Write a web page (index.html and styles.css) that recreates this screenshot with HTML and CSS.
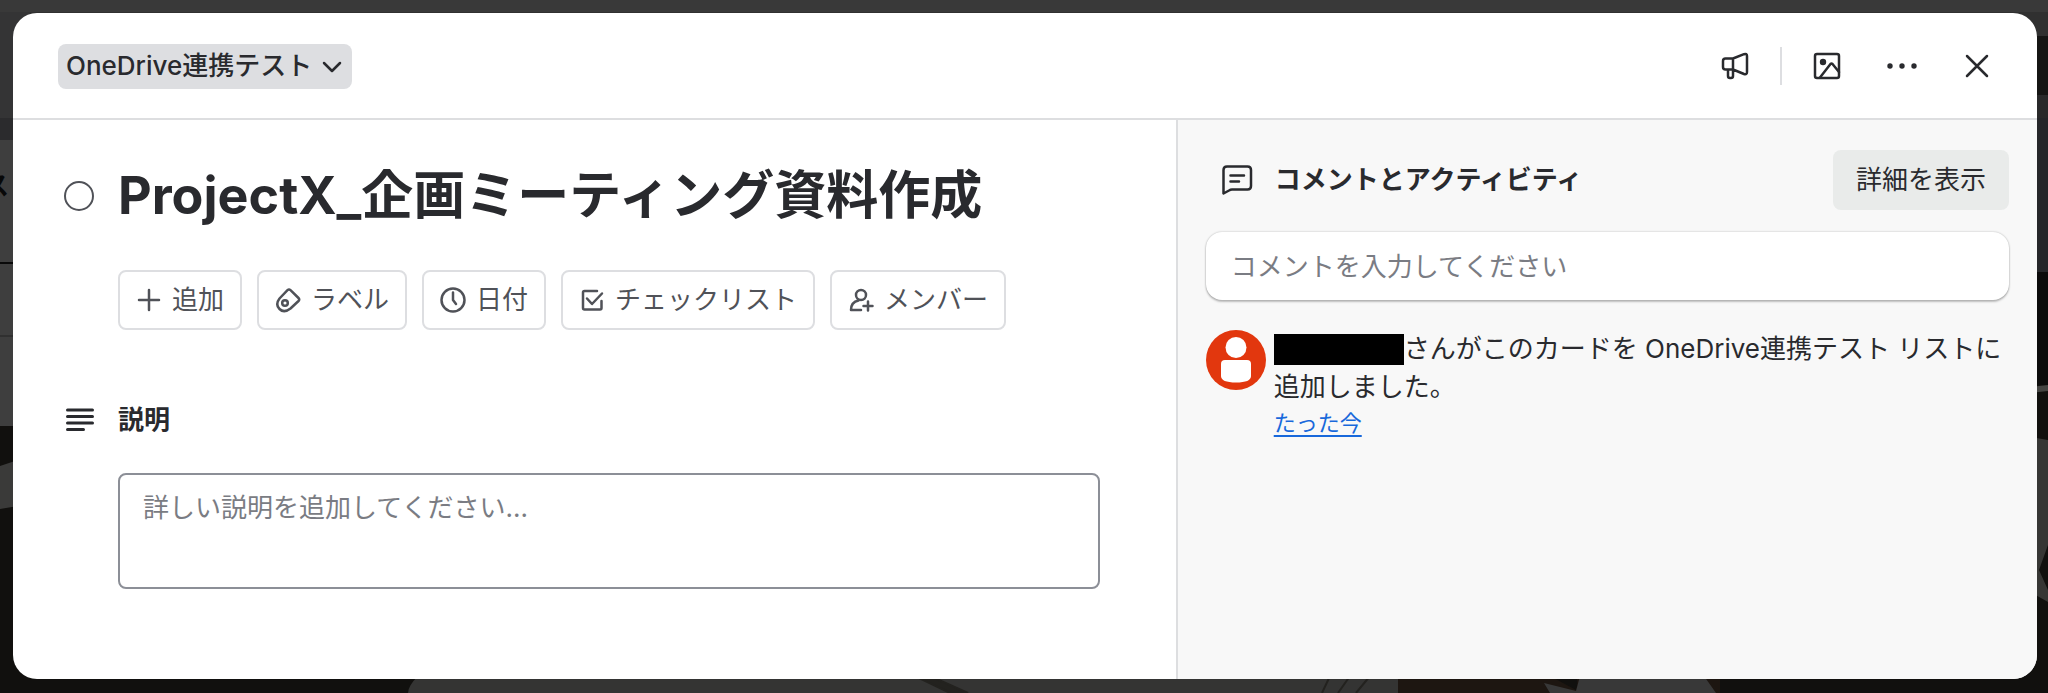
FILE: index.html
```html
<!DOCTYPE html>
<html lang="ja">
<head>
<meta charset="utf-8">
<meta name="viewport" content="width=device-width, initial-scale=1">
<title>ProjectX_企画ミーティング資料作成</title>
<link rel="stylesheet" href="styles.css">
</head>
<body>
<svg class="board" viewBox="0 0 2048 693" preserveAspectRatio="none" aria-hidden="true">
  <rect width="2048" height="693" fill="#11100e"/>
  <rect width="2048" height="12" fill="#393939"/>
  <rect y="12" width="2048" height="24" fill="#303030"/>
  <rect y="12" width="30" height="106" fill="#343435"/>
  <rect y="118" width="30" height="22" fill="#2b2b2d"/>
  <rect y="140" width="30" height="286" fill="#3e3e3e"/>
  <rect y="262" width="30" height="2" fill="#090909"/>
  <rect y="335" width="30" height="2" fill="#303030"/>
  <path d="M0 466L30 456V504L0 509Z" fill="#3a3a39"/>
  <rect x="2030" y="36" width="18" height="59" fill="#151514"/>
  <rect x="2030" y="95" width="18" height="23" fill="#29292a"/>
  <rect x="2030" y="118" width="18" height="154" fill="#25262a"/>
  <rect x="2030" y="272" width="18" height="113" fill="#0b0b0b"/>
  <path d="M2030 387L2048 385V391L2030 393Z" fill="#444442"/>
  <path d="M2030 437L2048 440V545L2039 570L2048 590V602L2030 592Z" fill="#363634"/>
  <path d="M418 676H1400V693H408Q408 686 418 676Z" fill="#343433"/>
  <path d="M1398 676H1550L1576 690Q1580 676 1572 676H1720V693H1398Z" fill="#1d1611"/>
  <path d="M1544 683L1576 691L1580 676H1704L1716 693H1550Z" fill="#383838"/>
  <path d="M930 676L968 693H950L915 676ZM1330 676L1322 693M1350 676L1338 693M1370 676L1356 693" fill="#23221f" stroke="#23221f" stroke-width="2"/>
  <text class="board-text" x="-17" y="195">ス</text>
</svg>

<main class="card">
  <header class="card-header">
    <button class="list-button" type="button">OneDrive連携テスト
      <svg width="24" height="24" viewBox="0 0 24 24" class="line"><path d="M4 9l8 8 8-8"/></svg>
    </button>
    <div class="actions">
      <button class="icon-button" type="button" aria-label="フィードバック">
        <svg width="32" height="32" viewBox="0 0 32 32" class="line"><path d="M14 8.500H6.500Q4 8.500 4 11V17Q4 19.500 6.500 19.500H14ZM14 8.500L25 4.200Q28 3.200 28 6V22Q28 25 25 24L14 19.500M9 19.500V26Q9 28 11 28H12Q14 28 14 26V19.500"/></svg>
      </button>
      <span class="divider"></span>
      <button class="icon-button" type="button" aria-label="カバー">
        <svg width="32" height="32" viewBox="0 0 32 32" class="line"><rect x="4" y="4" width="24" height="24" rx="2"/><circle cx="12" cy="12" r="3.200" fill="currentColor" stroke="none"/><path d="M9 27.500L19.500 14Q20.500 13 21.500 14L28 22"/></svg>
      </button>
      <button class="icon-button" type="button" aria-label="メニュー">
        <svg width="32" height="32" viewBox="0 0 32 32" fill="currentColor"><circle cx="4" cy="16" r="2.700"/><circle cx="16" cy="16" r="2.700"/><circle cx="28" cy="16" r="2.700"/></svg>
      </button>
      <button class="icon-button" type="button" aria-label="閉じる">
        <svg width="32" height="32" viewBox="0 0 32 32" class="line"><path d="M6 6L26 26M26 6L6 26"/></svg>
      </button>
    </div>
  </header>

  <div class="card-body">
    <section class="details">
      <input class="done" type="checkbox" aria-label="完了にする">
      <h1 class="title">ProjectX_企画ミーティング資料作成</h1>

      <div class="tools">
        <button class="tool" type="button"><svg width="26" height="26" viewBox="0 0 26 26" class="line"><path d="M13 3V23M3 13H23"/></svg>追加</button>
        <button class="tool" type="button"><svg width="26" height="26" viewBox="0 0 26 26" class="line"><path d="M12.500 3.200Q14 1.800 15.500 3.200L23.500 11Q25 12.500 23.500 14L15.500 21.500Q9 26.500 4.500 22Q0 17.500 4.500 11.500Z"/><circle cx="10" cy="16" r="2.800"/></svg>ラベル</button>
        <button class="tool" type="button"><svg width="26" height="26" viewBox="0 0 26 26" class="line"><circle cx="13" cy="13" r="11.500"/><path d="M13 5.500V13L16 17"/></svg>日付</button>
        <button class="tool" type="button"><svg width="26" height="26" viewBox="0 0 26 26" class="line"><path d="M18 4H5.500Q4 4 4 5.500V21Q4 22.500 5.500 22.500H21Q22.500 22.500 22.500 21V14"/><path d="M8 11.500L13 17L23 6.500"/></svg>チェックリスト</button>
        <button class="tool" type="button"><svg width="26" height="26" viewBox="0 0 26 26" class="line"><circle cx="13" cy="8" r="5"/><path d="M13 23H3Q3 15 10.500 13.500M20 14.500V23.500M15.500 19H24.500"/></svg>メンバー</button>
      </div>

      <svg class="section-icon line" width="30" height="30" viewBox="0 0 30 30"><path d="M3.500 5H28.500M3.500 11.500H28.500M3.500 18H28.500M3.500 24.500H19.500"/></svg>
      <h2 class="heading"><label for="description">説明</label></h2>
      <textarea class="description" id="description" placeholder="詳しい説明を追加してください..."></textarea>
    </section>

    <aside class="activity">
      <div class="activity-header">
        <svg width="32" height="32" viewBox="0 0 32 32" class="line"><path d="M2.500 29.500V6Q2.500 2.500 6 2.500H26.500Q30 2.500 30 6V22Q30 25.500 26.500 25.500H11Q9.500 25.500 8 26.500L2.500 29.500ZM9.500 11.500H23M9.500 17.500H18"/></svg>
        <h2 class="heading">コメントとアクティビティ</h2>
        <button class="show" type="button">詳細を表示</button>
      </div>
      <input class="comment" type="text" aria-label="コメント" placeholder="コメントを入力してください">
      <div class="entry">
        <svg class="avatar" width="60" height="60" viewBox="0 0 60 60"><circle cx="30" cy="30" r="30" fill="#e2370e"/><circle cx="30" cy="17.500" r="10.500" fill="#fff"/><path d="M15 34Q15 30 19 30H41Q45 30 45 34V46Q45 52.500 30 52.500T15 46Z" fill="#fff"/></svg>
        <div>
          <p class="message"><span class="redacted"></span>さんがこのカードを OneDrive連携テスト リストに追加しました。</p>
          <a class="time" href="#">たった今</a>
        </div>
      </div>
    </aside>
  </div>
</main>
</body>
</html>
```

FILE: styles.css
```css
* {
  box-sizing: border-box;
}

body {
  display: flex;
  min-height: 100vh;
  margin: 0;
  padding: 13px 11px 14px 13px;
  background: #11100e;
  color: #292a2e;
  font-family: Inter, "Noto Sans CJK JP", sans-serif;
  font-size: 26px;
  line-height: 38px;
}

button,
input,
textarea {
  margin: 0;
  border: 0;
  color: inherit;
  font: inherit;
}

button {
  cursor: pointer;
}

h1,
h2,
p {
  margin: 0;
}

svg {
  flex: none;
}

.line {
  fill: none;
  stroke: currentColor;
  stroke-width: 2.5;
  stroke-linecap: round;
  stroke-linejoin: round;
}

.board {
  position: absolute;
  inset: 0;
  width: 100%;
  height: 100%;
}

.board-text {
  fill: #080808;
  font-size: 26px;
  font-weight: 700;
}

.card {
  position: relative;
  display: flex;
  flex: 1;
  flex-direction: column;
  min-width: 0;
  overflow: hidden;
  border-radius: 24px;
  background: #fff;
}

.card-header {
  display: flex;
  align-items: center;
  justify-content: space-between;
  padding: 23px 30px 22px 45px;
  border-bottom: 2px solid #dddee0;
}

.list-button {
  display: flex;
  align-items: center;
  gap: 8px;
  padding: 3px 8px 4px 8px;
  border-radius: 8px;
  background: #dddee1;
  font-weight: 500;
}

.actions {
  display: flex;
  align-items: center;
  gap: 15px;
}

.icon-button {
  display: grid;
  place-items: center;
  width: 60px;
  height: 60px;
  padding: 0;
  background: none;
}

.divider {
  width: 2px;
  height: 38px;
  background: #dddee1;
}

.card-body {
  display: grid;
  flex: 1;
  grid-template-columns: minmax(0, 27fr) minmax(0, 20fr);
}

.details {
  display: grid;
  grid-template-columns: 30px minmax(0, 1fr);
  align-content: start;
  align-items: center;
  column-gap: 24px;
  padding: 44px 76px 44px 51px;
}

.done {
  appearance: none;
  width: 30px;
  height: 30px;
  border: 2px solid #505258;
  border-radius: 50%;
}

.title {
  font-size: 52px;
  font-weight: 700;
  line-height: 64px;
}

.tools {
  display: flex;
  flex-wrap: wrap;
  grid-column: 2;
  gap: 15px;
  margin: 42px 0 71px;
}

.tool {
  display: flex;
  align-items: center;
  gap: 10px;
  height: 60px;
  padding: 0 16px;
  border: 2px solid #dddee1;
  border-radius: 8px;
  background: #fff;
  color: #505258;
}

.section-icon {
  stroke-width: 3;
}

.heading {
  font-size: 26px;
  font-weight: 700;
}

.description {
  grid-column: 2;
  width: 100%;
  height: 116px;
  margin-top: 34px;
  padding: 14px 23px;
  border: 2px solid #8c8f97;
  border-radius: 8px;
  resize: none;
}

::placeholder {
  color: #7a7c83;
  opacity: 1;
}

.activity {
  padding: 30px 28px;
  border-left: 2px solid #dddee0;
  background: #f8f8f8;
}

.activity-header {
  display: flex;
  align-items: center;
  gap: 22px;
  padding-left: 15px;
}

.show {
  height: 60px;
  margin-left: auto;
  padding: 0 23px;
  border-radius: 8px;
  background: #e9ebea;
}

.comment {
  width: 100%;
  height: 68px;
  margin: 22px 0 30px;
  padding: 0 25px;
  border-radius: 16px;
  background: #fff;
  box-shadow: 0 2px 2px #1e1f2140, 0 0 2px #1e1f2150;
}

.entry {
  display: flex;
  gap: 8px;
}

.message {
  color: #292a2e;
}

.redacted {
  display: inline-block;
  width: 130px;
  height: 31px;
  background: #000;
  vertical-align: -7px;
}

.time {
  display: block;
  width: fit-content;
  color: #1868db;
  font-size: 22px;
  line-height: 34px;
  text-underline-offset: 4px;
}
```
